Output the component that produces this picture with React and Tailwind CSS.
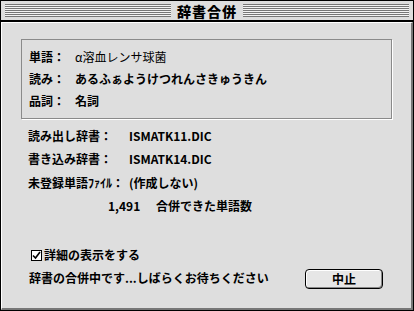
import React from "react";

const font = { fontFamily: '"Noto Sans CJK JP", "Liberation Sans", sans-serif' };

function Row({ label, value, labelW = "w-[46px]", h = "h-[22px]" }) {
  return (
    <div className={`flex items-center ${h}`}>
      <span className={`${labelW} shrink-0`}>{label}</span>
      <span>{value}</span>
    </div>
  );
}

export default function App() {
  return (
    <div
      className="w-[414px] h-[311px] bg-[#dedede] border border-black flex flex-col text-[12px] font-bold text-black leading-none"
      style={font}
    >
      {/* Title bar */}
      <div className="h-[21px] shrink-0 border-b-2 border-black bg-[#dedede] flex items-center px-[4px]">
        <div className="flex-1 h-[13px] bg-[repeating-linear-gradient(to_bottom,#777_0px,#777_1px,#f4f4f4_1px,#f4f4f4_2px)]" />
        <span className="px-[6px] text-[14px] font-black tracking-[1px]">辞書合併</span>
        <div className="flex-1 h-[13px] bg-[repeating-linear-gradient(to_bottom,#777_0px,#777_1px,#f4f4f4_1px,#f4f4f4_2px)]" />
      </div>

      {/* Content */}
      <div className="flex-1 flex flex-col border-t border-l border-white border-r-2 border-b-2 border-r-[#777] border-b-[#777] pl-[19px] pr-[19px] pt-[16px]">
        <div className="border border-[#8a8a8a] shadow-[1px_1px_0_#fff] pl-[7px] pt-[5px] pb-[5px] h-[80px] flex flex-col justify-center">
          <div className="flex items-center h-[22px]">
            <span className="w-[46px] shrink-0">単語：</span>
            <span className="font-normal">α溶血レンサ球菌</span>
          </div>
          <Row label="読み：" value="あるふぁようけつれんさきゅうきん" />
          <Row label="品詞：" value="名詞" />
        </div>

        <div className="pl-[7px] pt-[5px] flex flex-col">
          <Row label="読み出し辞書：" value="ISMATK11.DIC" labelW="w-[101px]" h="h-[23px]" />
          <Row label="書き込み辞書：" value="ISMATK14.DIC" labelW="w-[101px]" h="h-[24px]" />
          <Row label="未登録単語ﾌｧｲﾙ：" value="(作成しない)" labelW="w-[101px]" h="h-[23px]" />
          <div className="flex items-center h-[24px] pl-[80px]">
            <span className="w-[48px]">1,491</span>
            <span>合併できた単語数</span>
          </div>
        </div>

        <div className="mt-auto pb-[24px] pl-[8px] flex items-end justify-between">
          <div className="flex flex-col gap-[11px]">
            <div className="flex items-center gap-[2px] pl-[2px]">
              <span className="w-[11px] h-[11px] border border-black bg-white flex items-center justify-center">
                <svg width="9" height="9" viewBox="0 0 9 9">
                  <path d="M1 4.5 L3.5 7 L8 1" stroke="#000" strokeWidth="1.6" fill="none" />
                </svg>
              </span>
              <span>詳細の表示をする</span>
            </div>
            <span>辞書の合併中です...しばらくお待ちください</span>
          </div>
          <button className="w-[78px] h-[20px] mr-[9px] mb-[-5px] border border-black rounded-[4px] bg-[#e6e6e6] shadow-[inset_-1px_-1px_0_#888,inset_1px_1px_0_#fff] flex items-center justify-center">
            中止
          </button>
        </div>
      </div>
    </div>
  );
}
